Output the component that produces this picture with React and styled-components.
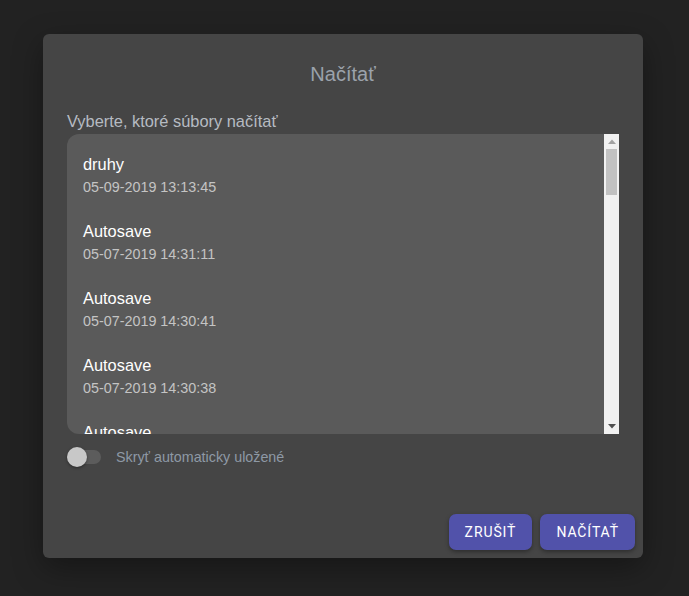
import React from "react";
import styled, { createGlobalStyle } from "styled-components";

const Global = createGlobalStyle`
  html, body { margin: 0; padding: 0; background: #222222; }
  body { font-family: "Liberation Sans", Arial, sans-serif; }
  * { box-sizing: border-box; }
`;

const Page = styled.div`
  width: 689px;
  height: 596px;
  padding: 34px 0 0 43px;
`;

const Dialog = styled.div`
  width: 600px;
  height: 524px;
  background: #454545;
  border-radius: 6px;
  box-shadow: 0 10px 30px rgba(0, 0, 0, 0.35);
  display: flex;
  flex-direction: column;
  padding: 28px 8px 8px 8px;
`;

const Title = styled.h2`
  margin: 0;
  font-size: 20px;
  line-height: 24px;
  font-weight: 400;
  color: #9ba2ab;
  text-align: center;
`;

const Body = styled.div`
  padding: 25px 16px 0 16px;
  display: flex;
  flex-direction: column;
`;

const Label = styled.div`
  font-size: 16.4px;
  line-height: 20px;
  color: #b6bbc2;
  margin-bottom: 3px;
`;

const ListFrame = styled.div`
  display: flex;
  height: 300px;
`;

const List = styled.div`
  flex: 1;
  overflow: hidden;
  background: #5a5a5a;
  border-radius: 12px 0 0 12px;
  padding-top: 8px;
`;

const ScrollBar = styled.div`
  width: 15px;
  background: #f1f1f1;
  display: flex;
  flex-direction: column;
  align-items: center;
`;

const ArrowBox = styled.div`
  width: 15px;
  height: 15px;
  display: flex;
  align-items: center;
  justify-content: center;
`;

const Thumb = styled.div`
  width: 11px;
  height: 46px;
  background: #c1c1c1;
`;

const Spacer = styled.div`
  flex: 1;
`;

const Item = styled.div`
  padding: 10px 16px 12px 16px;
`;

const Name = styled.div`
  font-size: 16.4px;
  line-height: 24px;
  color: #ffffff;
`;

const Date = styled.div`
  font-size: 14.35px;
  line-height: 20px;
  margin-top: 1px;
  color: #c4c4c4;
`;

const ToggleRow = styled.div`
  display: flex;
  align-items: center;
  margin-top: 13px;
  height: 20px;
`;

const Track = styled.div`
  position: relative;
  width: 34px;
  height: 14px;
  border-radius: 7px;
  background: #5c5c5c;
`;

const Knob = styled.div`
  position: absolute;
  left: 0;
  top: -3px;
  width: 20px;
  height: 20px;
  border-radius: 50%;
  background: #c8c8c8;
  box-shadow: 0 1px 3px rgba(0, 0, 0, 0.4);
`;

const ToggleLabel = styled.span`
  margin-left: 15px;
  font-size: 14.3px;
  color: #8e99a5;
`;

const Actions = styled.div`
  margin-top: auto;
  display: flex;
  justify-content: flex-end;
  gap: 8px;
`;

const Button = styled.button`
  height: 36px;
  padding: 0 16px;
  border: none;
  border-radius: 7px;
  background: #5152aa;
  color: #ffffff;
  font-family: Roboto, "Liberation Sans", sans-serif;
  font-size: 14px;
  font-weight: 400;
  letter-spacing: 0.9px;
  text-transform: uppercase;
  box-shadow: 0 2px 4px rgba(0, 0, 0, 0.35);
  cursor: pointer;
`;

const files = [
  { name: "druhy", date: "05-09-2019 13:13:45" },
  { name: "Autosave", date: "05-07-2019 14:31:11" },
  { name: "Autosave", date: "05-07-2019 14:30:41" },
  { name: "Autosave", date: "05-07-2019 14:30:38" },
  { name: "Autosave", date: "05-07-2019 14:29:02" },
];

function ArrowIcon({ dir, color }) {
  return (
    <svg width="8" height="5" viewBox="0 0 8 5">
      {dir === "up" ? (
        <path d="M0 5 L4 0.5 L8 5 Z" fill={color} />
      ) : (
        <path d="M0 0 L4 4.5 L8 0 Z" fill={color} />
      )}
    </svg>
  );
}

export default function App() {
  return (
    <>
      <Global />
      <Page>
        <Dialog>
          <Title>Načítať</Title>
          <Body>
            <Label>Vyberte, ktoré súbory načítať</Label>
            <ListFrame>
              <List>
                {files.map((f, i) => (
                  <Item key={i}>
                    <Name>{f.name}</Name>
                    <Date>{f.date}</Date>
                  </Item>
                ))}
              </List>
              <ScrollBar>
                <ArrowBox>
                  <ArrowIcon dir="up" color="#a3a3a3" />
                </ArrowBox>
                <Thumb />
                <Spacer />
                <ArrowBox>
                  <ArrowIcon dir="down" color="#505050" />
                </ArrowBox>
              </ScrollBar>
            </ListFrame>
            <ToggleRow>
              <Track>
                <Knob />
              </Track>
              <ToggleLabel>Skryť automaticky uložené</ToggleLabel>
            </ToggleRow>
          </Body>
          <Actions>
            <Button>Zrušiť</Button>
            <Button>Načítať</Button>
          </Actions>
        </Dialog>
      </Page>
    </>
  );
}
